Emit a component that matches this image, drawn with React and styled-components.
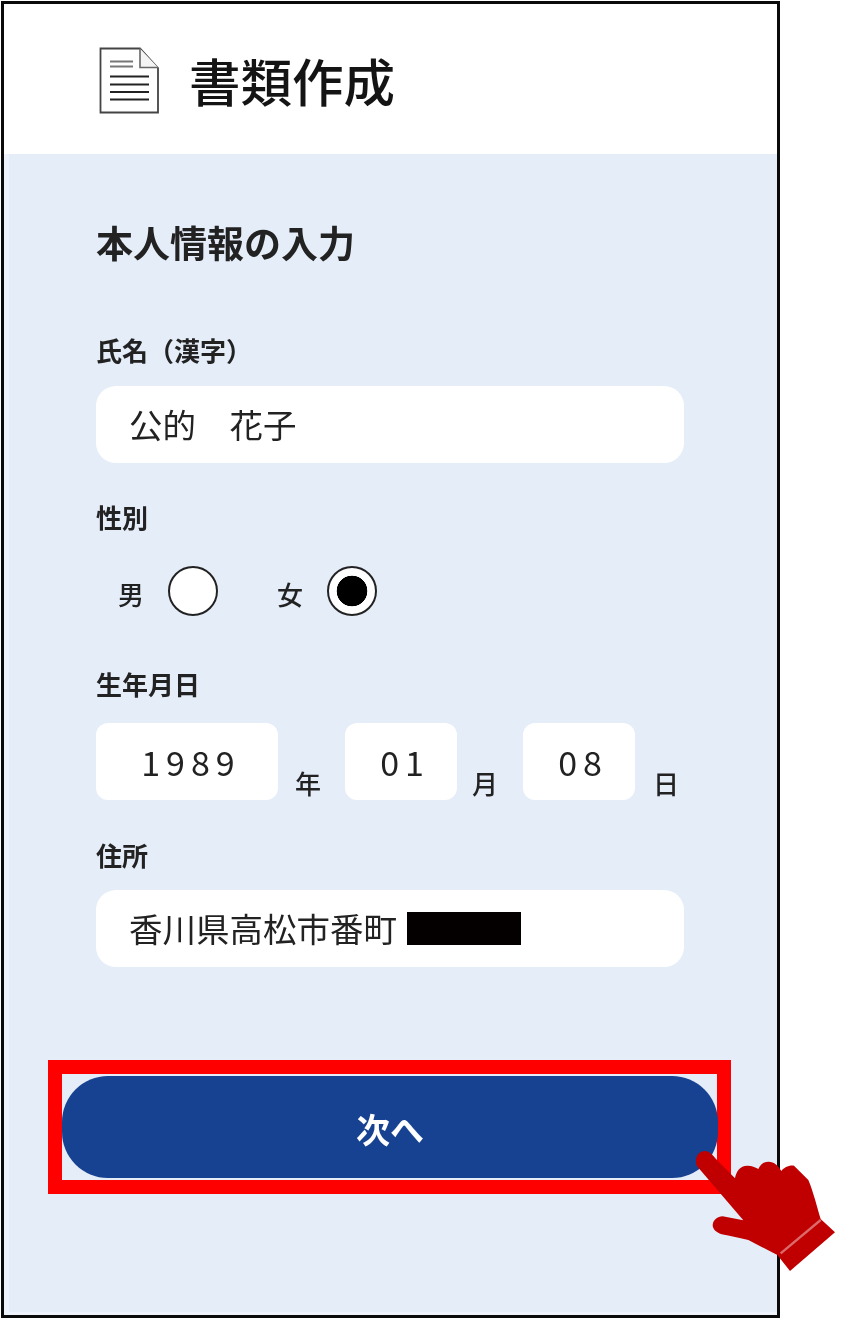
import React from 'react';
import styled, { createGlobalStyle } from 'styled-components';

const GlobalStyle = createGlobalStyle`
	html, body {
		margin: 0;
		padding: 0;
		background: #fff;
	}
	body {
		font-family: 'Noto Sans CJK JP', 'Noto Sans', sans-serif;
		color: #1a1a1a;
	}
`;

const DocIcon = () => (
	<IconSvg viewBox='0 0 60 67' aria-hidden='true'>
		<path d='M1.5 1.5H41L59 21V65.5H1.5Z' fill='#fff' stroke='#444' strokeWidth='1.8' />
		<path d='M41 1.5V20.5H59' fill='#f4f4f4' stroke='#666' strokeWidth='1.6' />
		<path d='M11 14.5H34M11 19.5H34' stroke='#777' strokeWidth='1.8' />
		<path d='M11 29.5H50M11 37.5H50M11 45H50M11 52.5H50' stroke='#222' strokeWidth='1.8' />
	</IconSvg>
);

const PointerHand = () => (
	<HandSvg viewBox='0 0 450 390' aria-hidden='true'>
		<path
			d='M20 62C12 35 28 18 45 18C58 18 68 30 78 42L135 100C138 80 150 62 172 62C188 62 198 68 205 72C212 56 222 50 236 50C252 50 266 62 274 78C282 68 296 60 312 62L355 105C370 140 382 190 392 222L435 262L300 378L262 330L175 285C150 280 120 272 95 268C78 262 68 252 68 240C70 224 82 215 98 214L160 226Z'
			fill='#c00000'
		/>
		<path d='M272 325L392 225' stroke='#dc6a6a' strokeWidth='7' fill='none' />
	</HandSvg>
);

const App = () => {
	return (
		<Page>
			<GlobalStyle />
			<Frame>
				<Header>
					<DocIcon />
					<Title>書類作成</Title>
				</Header>
				<Panel>
					<Heading>本人情報の入力</Heading>

					<FieldLabel $top={71}>氏名（漢字）</FieldLabel>
					<TextField $top={21}>公的　花子</TextField>

					<FieldLabel $top={39}>性別</FieldLabel>
					<RadioRow>
						<RadioOption>
							<RadioText>男</RadioText>
							<Radio />
						</RadioOption>
						<RadioOption>
							<RadioText>女</RadioText>
							<Radio $checked />
						</RadioOption>
					</RadioRow>

					<FieldLabel $top={53}>生年月日</FieldLabel>
					<DateRow>
						<DateBox $width={182}>1989</DateBox>
						<DateUnit $width={67} $left={17}>年</DateUnit>
						<DateBox $width={112}>01</DateBox>
						<DateUnit $width={66} $left={15}>月</DateUnit>
						<DateBox $width={112}>08</DateBox>
						<DateUnit $width={49} $left={18}>日</DateUnit>
					</DateRow>

					<FieldLabel $top={40}>住所</FieldLabel>
					<TextField $top={20}>
						香川県高松市番町
						<Redacted />
					</TextField>

					<Highlight>
						<NextButton>次へ</NextButton>
					</Highlight>
				</Panel>
			</Frame>
			<PointerHand />
		</Page>
	);
};

export default App;

const Page = styled.div`
	position: relative;
	width: 848px;
	height: 1319px;
	overflow: hidden;
	filter: blur(0.6px);
`;

const Frame = styled.div`
	box-sizing: border-box;
	width: 779px;
	height: 1317px;
	margin: 1px 0 0 1px;
	border: 3px solid #0a0a0a;
	display: flex;
	flex-direction: column;
`;

const Header = styled.header`
	height: 150px;
	display: flex;
	align-items: center;
	padding: 0 0 0 95px;
	gap: 30px;
	flex: none;
`;

const IconSvg = styled.svg`
	width: 60px;
	height: 67px;
	margin-top: 3px;
	flex: none;
`;

const Title = styled.h1`
	margin: 2px 0 0;
	font-size: 51.5px;
	line-height: 60px;
	font-weight: 500;
	color: #141414;
`;

const Panel = styled.main`
	flex: 1;
	background: #e4edf8;
	box-shadow: inset 5px 0 0 #eef3fb, inset 0 -3px 0 #eef3fb;
	padding: 66px 0 0 92px;
`;

const Heading = styled.h2`
	margin: 0;
	font-size: 37px;
	line-height: 44px;
	font-weight: 700;
	color: #222;
`;

const FieldLabel = styled.div`
	margin-top: ${(p) => p.$top}px;
	font-size: 26px;
	line-height: 30px;
	font-weight: 700;
	color: #222;
`;

const TextField = styled.div`
	box-sizing: border-box;
	margin-top: ${(p) => p.$top}px;
	width: 588px;
	height: 77px;
	padding: 0 0 3px 33px;
	display: flex;
	align-items: center;
	gap: 10px;
	background: #fff;
	border-radius: 20px;
	font-size: 33.5px;
	color: #222;
`;

const Redacted = styled.span`
	width: 114px;
	height: 33px;
	margin-top: 3px;
	background: #040000;
`;

const RadioRow = styled.div`
	margin-top: 34px;
	padding-left: 22px;
	display: flex;
	gap: 59px;
	height: 50px;
`;

const RadioOption = styled.div`
	display: flex;
	align-items: center;
	gap: 24px;
`;

const RadioText = styled.span`
	font-size: 26px;
	font-weight: 500;
	color: #222;
	margin-top: 4px;
`;

const Radio = styled.span`
	box-sizing: border-box;
	width: 50px;
	height: 50px;
	border-radius: 50%;
	border: 2px solid #222;
	background: ${(p) => (p.$checked ? 'radial-gradient(circle, #000 0 15px, #fff 15.6px)' : '#fff')};
`;

const DateRow = styled.div`
	margin-top: 24px;
	display: flex;
	height: 77px;
`;

const DateBox = styled.div`
	box-sizing: border-box;
	width: ${(p) => p.$width}px;
	padding-left: 8px;
	display: flex;
	align-items: center;
	justify-content: center;
	background: #fff;
	border-radius: 12px;
	font-size: 34px;
	letter-spacing: 6px;
	color: #222;
`;

const DateUnit = styled.div`
	box-sizing: border-box;
	width: ${(p) => p.$width}px;
	padding: 0 0 2px ${(p) => p.$left}px;
	display: flex;
	align-items: flex-end;
	font-size: 26px;
	line-height: 30px;
	font-weight: 500;
	color: #222;
`;

const Highlight = styled.div`
	box-sizing: border-box;
	margin: 93px 0 0 -48px;
	width: 683px;
	height: 134px;
	border: 14px solid #ff0000;
	padding-top: 2px;
`;

const NextButton = styled.button`
	display: block;
	width: 656px;
	height: 102px;
	padding: 3px 0 0;
	border: 0;
	border-radius: 46px;
	background: #174291;
	color: #fff;
	font-family: inherit;
	font-size: 34px;
	font-weight: 700;
`;

const HandSvg = styled.svg`
	position: absolute;
	left: 690px;
	top: 1145px;
	width: 150px;
	height: 130px;
`;
